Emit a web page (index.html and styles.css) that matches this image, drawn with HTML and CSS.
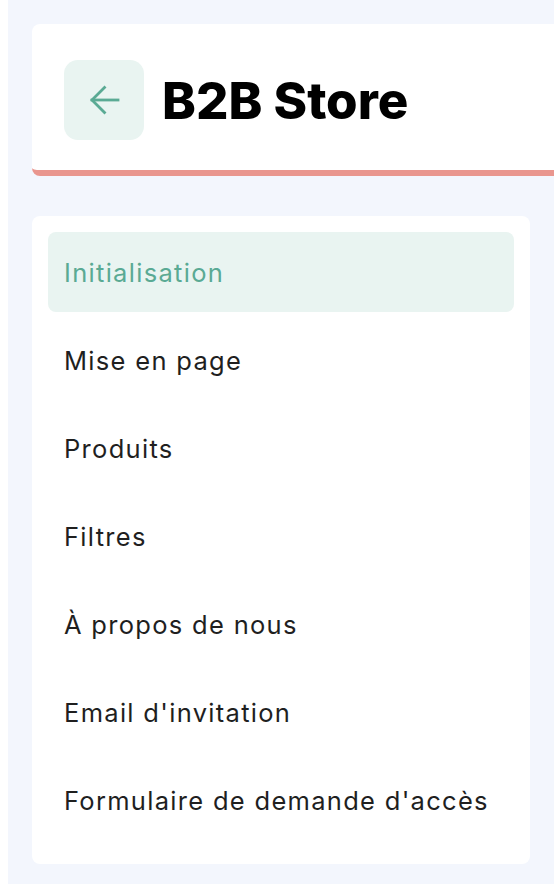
FILE: index.html
```html
<!DOCTYPE html>
<html lang="fr">
<head>
<meta charset="utf-8">
<title>B2B Store</title>
<link rel="stylesheet" href="styles.css">
</head>
<body>
<div class="page">
  <header class="header-card">
    <button class="back-btn" aria-label="Retour">
      <svg width="40" height="40" viewBox="0 0 40 40" fill="none" stroke="#5aaa94" stroke-width="2.8" stroke-linecap="square">
        <line x1="8" y1="20" x2="34" y2="20"/>
        <polyline points="20.5,7.5 8,20 20.5,32.5"/>
      </svg>
    </button>
    <h1 class="title">B2B Store</h1>
  </header>
  <nav class="nav-card">
    <a class="nav-item active" href="#">Initialisation</a>
    <a class="nav-item" href="#">Mise en page</a>
    <a class="nav-item" href="#">Produits</a>
    <a class="nav-item" href="#">Filtres</a>
    <a class="nav-item" href="#">À propos de nous</a>
    <a class="nav-item" href="#">Email d'invitation</a>
    <a class="nav-item" href="#">Formulaire de demande d'accès</a>
  </nav>
</div>
</body>
</html>
```
FILE: styles.css
```css
html, body {
  margin: 0;
  padding: 0;
  background: #ffffff;
}
.page {
  margin-left: 8px;
  background: #f3f6fd;
  min-height: 884px;
  padding: 24px 0 0 24px;
  box-sizing: border-box;
  overflow: hidden;
}
.header-card {
  width: 560px;
  height: 152px;
  box-sizing: border-box;
  background: #ffffff;
  border-radius: 8px;
  border-bottom: 6px solid #e9968e;
  padding: 36px 32px 30px 32px;
  display: flex;
  align-items: center;
  gap: 18px;
}
.back-btn {
  width: 80px;
  height: 80px;
  border: none;
  border-radius: 14px;
  background: #e9f4f1;
  display: flex;
  align-items: center;
  justify-content: center;
  padding: 0;
  flex-shrink: 0;
}
.title {
  margin: 0;
  font-family: Inter, "Liberation Sans", sans-serif;
  font-weight: 800;
  font-size: 51px;
  color: #000000;
  line-height: 1;
}
.nav-card {
  margin-top: 40px;
  width: 498px;
  box-sizing: border-box;
  background: #ffffff;
  border-radius: 8px;
  padding: 16px 16px 24px 16px;
  display: flex;
  flex-direction: column;
  gap: 8px;
}
.nav-item {
  height: 80px;
  display: flex;
  align-items: center;
  padding: 0 16px;
  border-radius: 8px;
  font-family: Inter, "Liberation Sans", sans-serif;
  font-size: 25.5px;
  letter-spacing: 1.3px;
  font-weight: 400;
  color: #1f1f1f;
  text-decoration: none;
}
.nav-item.active {
  background: #e9f4f1;
  color: #5aaa94;
}
```
